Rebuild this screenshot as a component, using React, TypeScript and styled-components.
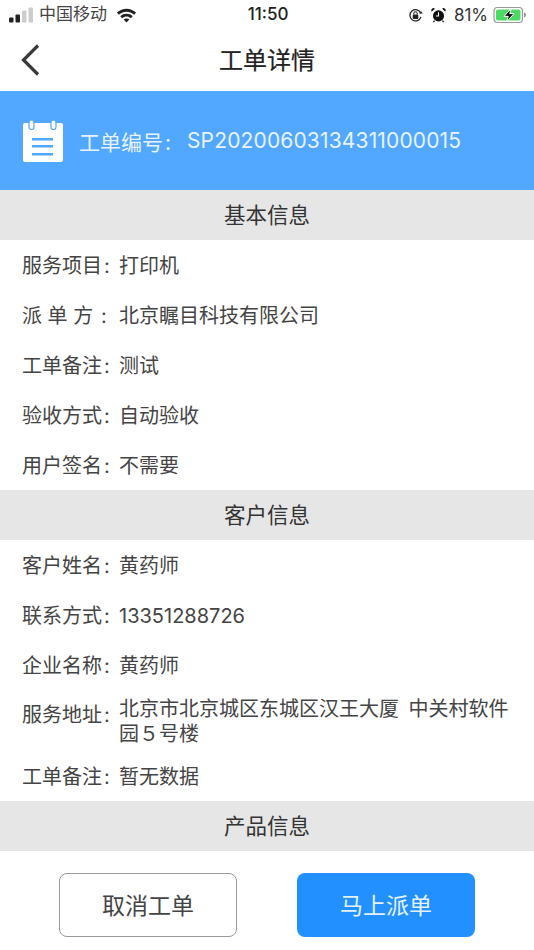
import React from "react";
import styled, { createGlobalStyle } from "styled-components";

const FONT = `"Inter", "Noto Sans CJK SC", "Noto Sans", sans-serif`;

const Global = createGlobalStyle`
  html, body { margin: 0; padding: 0; background: #fff; }
  body { font-family: ${FONT}; }
`;

const Page = styled.div`
  width: 534px;
  height: 950px;
  overflow: hidden;
  display: flex;
  flex-direction: column;
  background: #fff;
  color: #333;
`;

const StatusBar = styled.div`
  height: 30px;
  flex: none;
  padding: 0 7px 0 9px;
  display: grid;
  grid-template-columns: 1fr auto 1fr;
  align-items: center;
`;

const StatusLeft = styled.div`
  display: flex;
  align-items: center;
  gap: 6px;
  color: #444;
  font-size: 17px;
  line-height: 24px;
`;

const CarrierName = styled.span`
  margin-top: -2px;
`;

const WifiSlot = styled.span`
  display: flex;
  margin-left: 3px;
`;

const StatusRight = styled.div`
  display: flex;
  align-items: center;
  justify-content: flex-end;
  gap: 8px;
  color: #333;
`;

const Clock = styled.div`
  font-weight: 500;
  font-size: 17px;
  color: #222;
  margin-top: -2px;
`;

const Percent = styled.span`
  font-size: 17px;
  margin-right: -3px;
`;

const NavBar = styled.div`
  height: 61px;
  flex: none;
  box-sizing: border-box;
  padding-bottom: 4px;
  position: relative;
  display: flex;
  align-items: center;
  justify-content: center;
`;

const BackButton = styled.div`
  position: absolute;
  left: 20px;
  top: 13px;
  line-height: 0;
`;

const Title = styled.h1`
  margin: 0;
  font-size: 24px;
  font-weight: 400;
  color: #222;
  -webkit-text-stroke: 0.2px #222;
`;

const Banner = styled.div`
  height: 99px;
  flex: none;
  background: #52a8ff;
  display: flex;
  align-items: center;
  padding-left: 23px;
  gap: 16px;
  color: #e8f3ff;
  font-size: 21px;
`;

const BannerText = styled.div`
  display: flex;
  align-items: center;
`;

const BannerLabel = styled.span`
  width: 108px;
`;

const BannerValue = styled.span`
  letter-spacing: 0.15px;
`;

const Colon = styled.span`
  margin-left: 2px;
`;

const SectionHeader = styled.div`
  height: 50px;
  flex: none;
  box-sizing: border-box;
  padding-bottom: 3px;
  background: #e6e6e6;
  display: flex;
  align-items: center;
  justify-content: center;
  font-size: 21.5px;
  color: #333;
`;

const Row = styled.div<{ $tall?: boolean }>`
  height: ${(p) => (p.$tall ? 61 : 50)}px;
  flex: none;
  box-sizing: border-box;
  padding: 2px 22px 0;
  display: flex;
  align-items: center;
  font-size: 20px;
  line-height: 25px;
  color: #444;
`;

const RowLabel = styled.span<{ $raised?: boolean }>`
  flex: none;
  width: 97px;
  white-space: pre;
  margin-bottom: ${(p) => (p.$raised ? 12 : 0)}px;
`;

const RowValue = styled.span`
  flex: 1;
  word-spacing: 4px;
`;

const Footer = styled.div`
  flex: 1;
  display: flex;
  justify-content: center;
  gap: 60px;
  padding-top: 22px;
`;

const Button = styled.div<{ $primary?: boolean }>`
  width: 178px;
  height: 64px;
  box-sizing: border-box;
  padding-bottom: 2px;
  border-radius: 8px;
  display: flex;
  align-items: center;
  justify-content: center;
  font-size: 23px;
  background: ${(p) => (p.$primary ? "#2390ff" : "#fff")};
  color: ${(p) => (p.$primary ? "#e4f2ff" : "#444")};
  border: ${(p) => (p.$primary ? "none" : "1.5px solid #999")};
`;

const Signal = () => (
  <svg width="24" height="16" viewBox="0 0 24 16">
    <rect x="0" y="10.500" width="4.500" height="5" rx="1" fill="#222" />
    <rect x="6.500" y="7.500" width="4.500" height="8" rx="1" fill="#222" />
    <rect x="13" y="3.500" width="4.500" height="12" rx="1" fill="#ccc" />
    <rect x="19.500" y="0.500" width="4.500" height="15" rx="1" fill="#ccc" />
  </svg>
);

const Wifi = () => (
  <svg width="21" height="16" viewBox="0 0 22 16">
    <path d="M1 5.500C6.800 .2 15.200 .2 21 5.500l-2 2.200C14 3.400 8 3.400 3 7.700Z" fill="#222" />
    <path d="M4.500 9.200C8.300 5.800 13.700 5.800 17.500 9.200l-2 2.100c-2.600-2.200-6.400-2.200-9 0Z" fill="#222" />
    <path d="M8 12.700c1.800-1.400 4.200-1.400 6 0L11 15.800Z" fill="#222" />
  </svg>
);

const RotationLock = () => (
  <svg width="15" height="15" viewBox="0 0 16 16">
    <path d="M13.800 9.500A6 6 0 1 1 13.600 5.500" fill="none" stroke="#222" strokeWidth="1.400" />
    <path d="M15.600 5.800l-3.400.3 1.600-3Z" fill="#222" />
    <rect x="5" y="7" width="6" height="4.600" rx="1" fill="#222" />
    <path d="M6.200 7V5.800a1.800 1.800 0 0 1 3.600 0V7" fill="none" stroke="#222" strokeWidth="1.100" />
  </svg>
);

const Alarm = () => (
  <svg width="15" height="16" viewBox="0 0 17 17">
    <circle cx="8.500" cy="9.500" r="6.300" fill="#111" />
    <path d="M8.500 5.500v4.200H5.600" fill="none" stroke="#fff" strokeWidth="1.200" />
    <path d="M1 4.600 4.400 1.500a2.200 2.200 0 0 0-3.400 3.100Z M16 4.600 12.600 1.500a2.200 2.200 0 0 1 3.400 3.100Z" fill="#111" />
    <path d="M4 15l-1.200 1.600M13 15l1.200 1.600" stroke="#111" strokeWidth="1.400" />
  </svg>
);

const Battery = () => (
  <svg width="34" height="18" viewBox="0 0 34 18">
    <rect x="1" y="1.500" width="28.500" height="15" rx="3.500" fill="none" stroke="#999" strokeWidth="1.200" />
    <rect x="3" y="3.500" width="24.500" height="11" rx="1.800" fill="#4cd964" />
    <path d="M31 6.500c1.300.3 2 1.200 2 2.500s-.7 2.200-2 2.500Z" fill="#999" />
    <path d="M18.500 2 11 10.400h4.300L13.500 16 21 7.600h-4.300Z" fill="#111" stroke="#fff" strokeWidth="1" />
  </svg>
);

const Chevron = () => (
  <svg width="22" height="34" viewBox="0 0 22 34">
    <path d="M18 2.500 3.500 17 18 31.500" fill="none" stroke="#3a3a3a" strokeWidth="3.200" />
  </svg>
);

const ClipboardIcon = () => (
  <svg width="40" height="42" viewBox="0 0 40 42">
    <path d="M2 3h36a2 2 0 0 1 2 2V40a2 2 0 0 1-2 2H2a2 2 0 0 1-2-2V5a2 2 0 0 1 2-2Z" fill="#fff" />
    <rect x="6" y="0" width="5" height="9.500" rx="2.500" fill="#fff" stroke="#52a8ff" strokeWidth="1.200" />
    <rect x="28" y="0" width="5" height="9.500" rx="2.500" fill="#fff" stroke="#52a8ff" strokeWidth="1.200" />
    <rect x="9" y="18" width="21" height="2.500" fill="#52a8ff" />
    <rect x="9" y="25" width="21" height="2.500" fill="#52a8ff" />
    <rect x="9" y="33" width="21" height="2.500" fill="#52a8ff" />
  </svg>
);

type Item = { label: string; value: string; tall?: boolean };

const basic: Item[] = [
  { label: "服务项目", value: "打印机" },
  { label: "派 单 方 ", value: "北京瞩目科技有限公司" },
  { label: "工单备注", value: "测试" },
  { label: "验收方式", value: "自动验收" },
  { label: "用户签名", value: "不需要" },
];

const customer: Item[] = [
  { label: "客户姓名", value: "黄药师" },
  { label: "联系方式", value: "13351288726" },
  { label: "企业名称", value: "黄药师" },
  { label: "服务地址", value: "北京市北京城区东城区汉王大厦 中关村软件园５号楼", tall: true },
  { label: "工单备注", value: "暂无数据" },
];

const Rows = ({ items }: { items: Item[] }) => (
  <>
    {items.map((it) => (
      <Row key={it.label + it.value} $tall={it.tall}>
        <RowLabel $raised={it.tall}>
          {it.label}
          <Colon>:</Colon>
        </RowLabel>
        <RowValue>{it.value}</RowValue>
      </Row>
    ))}
  </>
);

export default function App() {
  return (
    <Page>
      <Global />
      <StatusBar>
        <StatusLeft>
          <Signal />
          <CarrierName>中国移动</CarrierName>
          <WifiSlot>
            <Wifi />
          </WifiSlot>
        </StatusLeft>
        <Clock>11:50</Clock>
        <StatusRight>
          <RotationLock />
          <Alarm />
          <Percent>81%</Percent>
          <Battery />
        </StatusRight>
      </StatusBar>
      <NavBar>
        <BackButton>
          <Chevron />
        </BackButton>
        <Title>工单详情</Title>
      </NavBar>
      <Banner>
        <ClipboardIcon />
        <BannerText>
          <BannerLabel>
            工单编号<Colon>:</Colon>
          </BannerLabel>
          <BannerValue>SP20200603134311000015</BannerValue>
        </BannerText>
      </Banner>
      <SectionHeader>基本信息</SectionHeader>
      <Rows items={basic} />
      <SectionHeader>客户信息</SectionHeader>
      <Rows items={customer} />
      <SectionHeader>产品信息</SectionHeader>
      <Footer>
        <Button>取消工单</Button>
        <Button $primary>马上派单</Button>
      </Footer>
    </Page>
  );
}
